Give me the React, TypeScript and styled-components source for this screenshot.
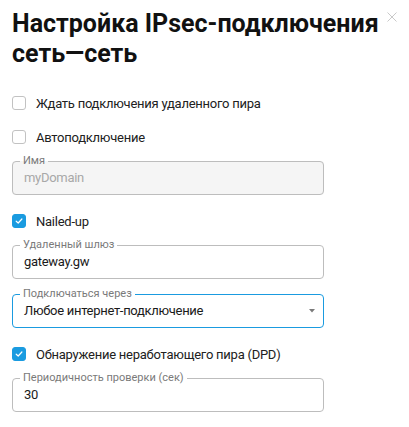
import { createGlobalStyle, styled } from "styled-components"

const GlobalStyle = createGlobalStyle`
    * {
        box-sizing: border-box;
    }

    body {
        margin: 0;
        background: #ffffff;
        font-family: Roboto, "Noto Sans", Arial, sans-serif;
        color: #212121;
    }
`

const Dialog = styled.div`
    width: 409px;
    padding: 9px 12px 12px 12px;
`

const Header = styled.div`
    display: flex;
    align-items: flex-start;
    justify-content: space-between;
    gap: 4px;

    h1 {
        margin: 0;
        font-size: 25px;
        line-height: 30px;
        font-weight: 700;
        color: #111111;
    }
`

const CloseButton = styled.button`
    flex: none;
    width: 10px;
    height: 10px;
    margin-top: 3px;
    padding: 0;
    border: none;
    background: none;
    cursor: pointer;
    display: flex;
`

const Form = styled.div`
    width: 312px;
    margin-top: 24px;
    display: flex;
    flex-flow: column nowrap;
`

const CheckRow = styled.label`
    display: flex;
    align-items: center;
    gap: 10px;
    height: 20px;
    font-size: 13px;
    letter-spacing: -0.25px;
    color: #212121;
    cursor: pointer;

    & + & {
        margin-top: 14px;
    }
`

const Box = styled.span<{ $checked?: boolean }>`
    flex: none;
    width: 14px;
    height: 14px;
    border-radius: 3px;
    border: 1px solid ${({ $checked }) => ($checked ? "#1a9be0" : "#c2c2c2")};
    background: ${({ $checked }) => ($checked ? "#1a9be0" : "#ffffff")};
    display: flex;
    align-items: center;
    justify-content: center;
`

const Field = styled.fieldset<{ $focused?: boolean; $disabled?: boolean }>`
    margin: 9px 0 0 0;
    padding: 0 0 0 7px;
    min-width: 0;
    border: 1px solid ${({ $focused }) => ($focused ? "#1a9be0" : "#bdbdbd")};
    border-radius: 4px;
    background: ${({ $disabled }) => ($disabled ? "#f5f5f5" : "#ffffff")};

    legend {
        padding: 0 3px;
        font-size: 11px;
        line-height: 12px;
        color: #7a7a7a;
    }

    ${CheckRow} + & {
        margin-top: 8px;
    }

    & + ${CheckRow} {
        margin-top: 16px;
    }
`

const Input = styled.input`
    display: block;
    width: 100%;
    height: 33px;
    margin-top: -6px;
    padding: 0 4px;
    border: none;
    outline: none;
    background: transparent;
    font-family: inherit;
    font-size: 13px;
    letter-spacing: -0.3px;
    color: #1a1a1a;

    &:disabled {
        color: #a8a8a8;
    }
`

const SelectValue = styled.div`
    display: flex;
    align-items: center;
    justify-content: space-between;
    height: 33px;
    margin-top: -6px;
    padding: 0 8px 0 4px;
    font-size: 13px;
    letter-spacing: -0.3px;
    color: #1a1a1a;
    cursor: pointer;
`

function Check() {
    return (
        <svg width="10" height="10" viewBox="0 0 10 10">
            <path d="M2.2 5.2 L4.2 7 L7.9 3" fill="none" stroke="#ffffff" strokeWidth="1.2" strokeLinecap="round" strokeLinejoin="round" />
        </svg>
    )
}

function CheckItem({ label, checked }: { label: string; checked?: boolean }) {
    return (
        <CheckRow>
            <Box $checked={checked}>{checked && <Check />}</Box>
            {label}
        </CheckRow>
    )
}

function TextField({ label, value, disabled }: { label: string; value: string; disabled?: boolean }) {
    return (
        <Field $disabled={disabled}>
            <legend>{label}</legend>
            <Input defaultValue={value} disabled={disabled} />
        </Field>
    )
}

function App() {
    return (
        <>
            <GlobalStyle />
            <Dialog>
                <Header>
                    <h1>Настройка IPsec-подключения сеть—сеть</h1>
                    <CloseButton aria-label="Закрыть">
                        <svg width="10" height="10" viewBox="0 0 10 10">
                            <path d="M0.5 0.5 L9.5 9.5 M9.5 0.5 L0.5 9.5" stroke="#c9c9c9" strokeWidth="1" />
                        </svg>
                    </CloseButton>
                </Header>

                <Form>
                    <CheckItem label="Ждать подключения удаленного пира" />
                    <CheckItem label="Автоподключение" />
                    <TextField label="Имя" value="myDomain" disabled />
                    <CheckItem label="Nailed-up" checked />
                    <TextField label="Удаленный шлюз" value="gateway.gw" />
                    <Field $focused>
                        <legend>Подключаться через</legend>
                        <SelectValue>
                            Любое интернет-подключение
                            <svg width="6" height="4" viewBox="0 0 6 4">
                                <path d="M0 0 L6 0 L3 3.5 Z" fill="#7a7a7a" />
                            </svg>
                        </SelectValue>
                    </Field>
                    <CheckItem label="Обнаружение неработающего пира (DPD)" checked />
                    <TextField label="Периодичность проверки (сек)" value="30" />
                </Form>
            </Dialog>
        </>
    )
}

export default App
